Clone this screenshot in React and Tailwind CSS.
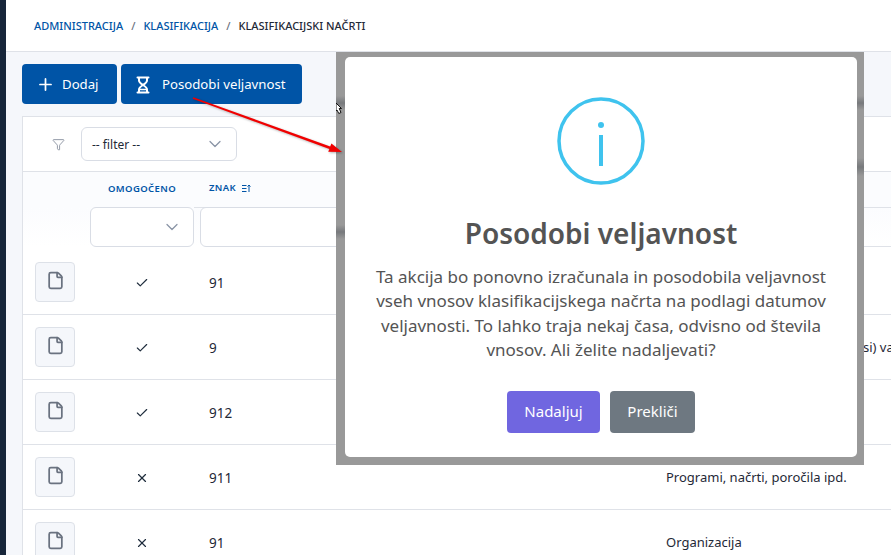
import React from 'react';
import { Check, ChevronDown, File, Funnel, Plus, X } from 'lucide-react';

const rows = [
  { enabled: true, code: '91' },
  { enabled: true, code: '9', clipped: 'si) va' },
  { enabled: true, code: '912' },
  { enabled: false, code: '911', desc: 'Programi, načrti, poročila ipd.' },
  { enabled: false, code: '91', desc: 'Organizacija' },
];

const SortIcon = () => (
  <svg width="9" height="9" viewBox="0 0 9 9" fill="none" stroke="#0054a6" strokeWidth="1">
    <path d="M0 1.5h4.5M0 4.5h4.5M0 7.5h4.5M7 8V1M5.5 2.5 7 1l1.5 1.5" />
  </svg>
);

const HourglassIcon = () => (
  <svg width="14" height="18" viewBox="0 0 14 18" fill="none" stroke="currentColor" strokeWidth="2" strokeLinecap="round" strokeLinejoin="round" className="shrink-0">
    <path d="M1.5 1.5h11M1.5 16.5h11" />
    <path d="M3 2v2.5c0 2 1.6 3 4 4.5 2.4-1.5 4-2.5 4-4.5V2" />
    <path d="M3 16v-2.5c0-2 1.6-3 4-4.5 2.4 1.5 4 2.5 4 4.5V16" />
    <path d="M4.5 13.5h5" strokeWidth="1.5" />
  </svg>
);

const Row = ({ row }) => (
  <div className="flex items-center h-[65px] border-b border-[#dfe2e8] bg-white shrink-0">
    <div className="w-[67px] pl-3 shrink-0">
      <button className="flex items-center justify-center w-10 h-10 rounded bg-[#f5f7fb] border border-[#dde1e8]">
        <File size={19} strokeWidth={2.2} className="text-[#6a7280] -mt-1" />
      </button>
    </div>
    <div className="w-[104px] flex justify-center shrink-0 pt-px">
      {row.enabled ? (
        <Check size={14} strokeWidth={2} className="text-[#1f2d3d]" />
      ) : (
        <X size={14} strokeWidth={2} className="text-[#1f2d3d]" />
      )}
    </div>
    <div className="w-[472px] pl-[15px] shrink-0 text-[13.5px] text-[#1f2937] pt-0.5">{row.code}</div>
    <div className="flex-1 whitespace-nowrap text-[13px] text-[#1f2937] pt-0.5 overflow-hidden">
      {row.desc}
      {row.clipped && <span className="block pl-[197px]">{row.clipped}</span>}
    </div>
  </div>
);

export default function App() {
  return (
    <div className="relative flex w-[891px] h-[555px] overflow-hidden bg-[#f5f7fb] font-['Noto_Sans',sans-serif]">
      <div className="w-[6px] bg-[#17263a] shrink-0" />
      <div className="flex-1 flex flex-col min-w-0">
        {/* Breadcrumb */}
        <div className="h-[52px] shrink-0 bg-white border-b border-[#dfe2e8] flex items-center pl-7 pt-px gap-2 text-[11px] font-medium uppercase">
          <span className="text-[#0054a6]">Administracija</span>
          <span className="text-[#6b7280]">/</span>
          <span className="text-[#0054a6]">Klasifikacija</span>
          <span className="text-[#6b7280]">/</span>
          <span className="text-[#1f2937]">Klasifikacijski načrti</span>
        </div>

        {/* Toolbar */}
        <div className="flex gap-1 pl-4 pt-3 pb-3 shrink-0">
          <button className="flex items-center h-10 w-[95px] pl-[14px] gap-[7px] pt-px rounded bg-[#0054a6] text-white text-[13.2px]">
            <Plus size={19} strokeWidth={2.2} />
            Dodaj
          </button>
          <button className="flex items-center h-10 w-[181px] pl-[15px] gap-[12px] pt-px rounded bg-[#0054a6] text-white text-[13.2px]">
            <HourglassIcon />
            Posodobi veljavnost
          </button>
        </div>

        {/* Card */}
        <div className="ml-4 flex-1 bg-white border-l border-t border-[#dfe2e8] flex flex-col min-h-0">
          <div className="h-[55px] flex items-center shrink-0 border-b border-[#dfe2e8]">
            <div className="w-[58px] flex justify-center pl-[12px] shrink-0">
              <Funnel size={13} strokeWidth={1.5} className="text-[#7b8494]" />
            </div>
            <div className="w-[156px] h-[34px] flex items-center justify-between pl-[10px] pr-[11px] border border-[#d9dde5] rounded-md text-[12px] text-[#1f2937]">
              <span className="pt-0.5">-- filter --</span>
              <ChevronDown size={20} strokeWidth={1.5} className="text-[#8a94a6]" />
            </div>
          </div>
          <div className="shrink-0 bg-[#fbfcfe]">
            <div className="flex h-[36px]">
              <div className="w-[67px] shrink-0" />
              <div className="w-[104px] shrink-0 flex items-center justify-center pb-0.5 text-[9.5px] font-semibold tracking-[0.4px] text-[#0054a6] uppercase">
                Omogočeno
              </div>
              <div className="flex-1 flex items-center gap-[6px] pl-[15px] pb-0.5 text-[9.5px] font-semibold tracking-[0.4px] text-[#0054a6] uppercase border-b border-[#dfe2e8]">
                Znak
                <SortIcon />
              </div>
            </div>
            <div className="flex h-[39px] bg-gradient-to-b from-[#fbfcfe] to-white">
              <div className="w-[67px] shrink-0" />
              <div className="w-[104px] shrink-0 flex items-center justify-end pr-[11px] h-10 -mt-px border border-[#d9dde5] rounded-md bg-white">
                <ChevronDown size={20} strokeWidth={1.5} className="text-[#8a94a6]" />
              </div>
              <div className="w-[300px] ml-[6px] h-10 -mt-px border border-[#d9dde5] rounded-md bg-white shrink-0" />
              <div className="flex-1 border-b border-[#dfe2e8]" />
            </div>
          </div>
          <div className="h-[3px] shrink-0 bg-white" />
          <div className="flex flex-col">
            {rows.map((row, i) => (
              <Row key={i} row={row} />
            ))}
          </div>
        </div>
      </div>

      {/* Modal, pasted over the page */}
      <div className="absolute left-[336px] top-[52px] w-[528px] h-[413px] bg-[#999999] pt-[5px] pl-[9px] pr-[7px] pb-[8px]">
        <span className="absolute left-0 top-[44px] w-[9px] h-[14px] bg-gradient-to-b from-[#999999] via-[#77797c] to-[#999999]" />
        <span className="absolute left-0 top-[173px] w-[9px] h-[14px] bg-gradient-to-b from-[#999999] via-[#77797c] to-[#999999]" />
        <span className="absolute right-0 top-[44px] w-[7px] h-[14px] bg-gradient-to-b from-[#999999] via-[#77797c] to-[#999999]" />
        <span className="absolute right-0 top-[106px] w-[7px] h-[18px] bg-gradient-to-b from-[#999999] via-[#77797c] to-[#999999]" />
        <div className="h-full bg-white rounded-[5px] flex flex-col items-center pt-10">
          <svg width="88" height="88" viewBox="0 0 88 88" fill="none" className="shrink-0">
            <circle cx="44" cy="44" r="42" stroke="#3fc3ee" strokeWidth="3.5" />
            <circle cx="44" cy="28" r="3" fill="#3fc3ee" />
            <rect x="42" y="38" width="4" height="31" fill="#3fc3ee" />
          </svg>
          <h2 className="mt-[27px] text-[28px] leading-[42px] font-semibold text-[#545454]">Posodobi veljavnost</h2>
          <p className="mt-[11px] w-[470px] text-center text-[17px] leading-[24.4px] text-[#545454]">
            Ta akcija bo ponovno izračunala in posodobila veljavnost vseh vnosov klasifikacijskega načrta na podlagi
            datumov veljavnosti. To lahko traja nekaj časa, odvisno od števila vnosov. Ali želite nadaljevati?
          </p>
          <div className="mt-[28px] flex gap-[10px]">
            <button className="w-[93px] h-[42px] rounded bg-[#7066e0] text-white text-[15px]">Nadaljuj</button>
            <button className="w-[85px] h-[42px] rounded bg-[#6e7881] text-white text-[15px]">Prekliči</button>
          </div>
        </div>
      </div>

      {/* Right half of the mouse pointer, cut off by the pasted image */}
      <svg width="7" height="13" viewBox="0 0 7 13" className="absolute left-[336px] top-[102px]">
        <path d="M0 1 5.5 6.5H3.2L5 10.5 2.8 11.5 1 8 0 9z" fill="#fff" stroke="#111" strokeWidth="1" />
      </svg>
      {/* Annotation arrow */}
      <svg
        width="170"
        height="70"
        viewBox="0 0 170 70"
        className="absolute left-[185px] top-[92px] drop-shadow-[1px_1px_1px_rgba(0,0,0,0.3)]"
      >
        <path d="M7.7 6.8 144.4 57 143.2 59.8 157 60 146.4 51.4 145.2 54.4 8.3 5.2z" fill="#f00000" />
      </svg>
    </div>
  );
}
